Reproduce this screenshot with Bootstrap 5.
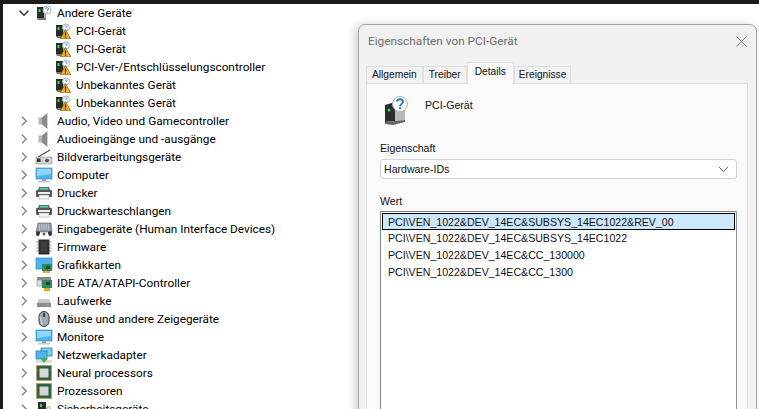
<!DOCTYPE html>
<html lang="de"><head><meta charset="utf-8"><title>Geräte-Manager</title>
<link href="https://cdn.jsdelivr.net/npm/bootstrap@5.3.0/dist/css/bootstrap.min.css" rel="stylesheet">
<style>
html,body{height:409px;overflow:hidden;background:#fff}
body{font-family:"Roboto","Noto Sans",sans-serif;font-size:11.8px;color:#000;position:relative}
.frame{height:409px;overflow:hidden;border-top:4px solid #1c1c1c;border-left:3px solid #1c1c1c}
.dev-row{height:18px;line-height:18px;white-space:nowrap}
.dev-top{padding-left:15px}
.dev-child{padding-left:52px}
.dev-chev{width:12px;height:12px;flex:none;margin-right:6px}
.dev-ico{width:16px;height:16px;flex:none}
.dev-ico-b{width:18px;height:16px;flex:none;margin-right:4px;margin-left:-1px}
.dev-label{margin-left:5px}
.dlg{position:absolute;left:358px;top:24px;width:399px;height:400px;background:#f1f1f1;border:1px solid #a4a4a4;border-radius:7px 7px 0 0;box-shadow:-4px 0 9px rgba(0,0,0,.16);font-family:"Liberation Sans",sans-serif;font-size:10.6px;color:#111}
.dlg-title{height:33px;font-family:"Roboto",sans-serif;font-size:11.8px;color:#6d6d6d;padding:0 9px}
.dlg-x{width:11px;height:11px}
.dlg-tabs{height:21px;margin:4px 0 0 7px;border:0;flex-wrap:nowrap}
.dlg-tabs .nav-link{font-size:10.2px;line-height:14px;color:#111;padding:1px 5px 0;height:17px;margin:4px 0 0;border:1px solid #dfdfdf;border-bottom:0;border-radius:0;background:#f1f1f1;white-space:nowrap}
.dlg-tabs .nav-item:last-child .nav-link{padding:1px 3.500px 0 4px}
.dlg-tabs .nav-link.active{height:22px;margin-top:0;margin-bottom:-1px;padding:2px 7px 0;background:#fafafa;color:#111;border-color:#dfdfdf;position:relative;z-index:1}
.dlg-panel{margin:0 8px 0 7px;height:345px;background:#fafafa;border:1px solid #dfdfdf;padding:12px 10px 0 13px}
.dlg-head{height:29px;gap:17px}
.dlg-head span{margin-top:-9px;font-size:10.6px}
.dlg-lbl{height:14px;line-height:14px}
.dlg-sel{height:20px;margin-top:4px;background:#fff;border:1px solid #d2d2d2;border-radius:3px;padding:0 3px;line-height:18px;font-size:10.6px}
.dlg-list{margin-top:3px;height:230px;background:#fff;border:1px solid #7b8288;border-right-color:#8a93a8;border-bottom:0;border-radius:0;padding:1px;display:block}
.dlg-item{height:17px;line-height:16px;padding:0 5px;border:1px solid transparent;background:transparent;border-radius:0;color:#111;font-size:10.6px;white-space:nowrap}
.dlg-item.active{background:#cce8ff;border-color:#000;color:#111;margin-top:0}
.wert-lbl{margin-top:15px}
</style></head><body>
<svg width="0" height="0" class="d-none" aria-hidden="true"><defs>
<symbol id="c-r" viewBox="0 0 12 12"><path d="M4 1.800 8.200 6 4 10.200" fill="none" stroke="#8a8a8a" stroke-width="1.500"/></symbol>
<symbol id="c-d" viewBox="0 0 12 12"><path d="M1.500 3.800 6 8.200 10.500 3.800" fill="none" stroke="#333" stroke-width="1.600"/></symbol>
<symbol id="u-base" viewBox="0 0 16 16"><rect x="1" y="2" width="7.500" height="11" fill="#2b2b2b"/><rect x="8" y="3" width="2" height="10" fill="#a9a9a9"/><rect x="2.500" y="4" width="2" height="3" fill="#35e04a"/><path d="M1 13h9v2H2z" fill="#777"/></symbol>
<symbol id="unk" viewBox="0 0 16 16"><use href="#u-base"/><circle cx="11" cy="5" r="4" fill="#fff" stroke="#9fb3c8"/><path d="M9.600 3.800c.2-1.500 2.900-1.500 2.900.1 0 1.100-1.400 1.200-1.400 2.300M11.100 7v.8" fill="none" stroke="#3a7fc0" stroke-width="1"/></symbol>
<symbol id="warn" viewBox="0 0 16 16"><use href="#u-base"/><circle cx="11" cy="4.500" r="3.500" fill="#fff" stroke="#9fb3c8"/><path d="M10 3.500c.2-1 2-1 2 .1 0 .7-.9.9-.9 1.500" fill="none" stroke="#3a7fc0" stroke-width=".8"/><path d="M10.500 6.500 15.800 15.800H5.200z" fill="#f2b01e" stroke="#5b4300" stroke-width=".6"/><path d="M10.500 9.500v3.200M10.500 13.600v1.200" stroke="#222" stroke-width="1.200"/></symbol>
<symbol id="aud" viewBox="0 0 16 16"><rect x="2.500" y="4.500" width="3.500" height="7" fill="#b5b5b5"/><path d="M6 4.500 11.500 0v16L6 11.500z" fill="#8b8b8b"/><path d="M11.500 .5v15" stroke="#d3d3d3"/></symbol>
<symbol id="cam" viewBox="0 0 18 16"><path d="M3 8 15 1" stroke="#555" stroke-width="1.300"/><path d="M1 8h16v7H1z" fill="#d4d4d4" stroke="#888" stroke-width=".6"/><rect x="2" y="9.500" width="3.500" height="3.500" fill="#333"/><circle cx="12" cy="11.500" r="2.500" fill="#555" stroke="#eee"/></symbol>
<symbol id="mon" viewBox="0 0 18 16"><rect x="1" y="1" width="16" height="11" fill="#4cb4ee" stroke="#3d88b8" stroke-width=".7"/><path d="M2 2h14v5L2 9z" fill="#8fd6f8"/><rect x="7" y="12" width="4" height="2" fill="#a3a3a3"/><rect x="3" y="14" width="12" height="1.500" fill="#c8c8c8"/></symbol>
<symbol id="prn" viewBox="0 0 18 16"><path d="M4 2h10l1 3H3z" fill="#5d6a6c"/><rect x="5" y="3" width="8" height="1.500" fill="#4fdc92"/><rect x="1" y="5" width="16" height="7" rx="1" fill="#555"/><rect x="3" y="7" width="12" height="2" fill="#eee"/><rect x="4" y="10" width="10" height="4" fill="#f4f4f4" stroke="#999" stroke-width=".5"/></symbol>
<symbol id="hid" viewBox="0 0 18 16"><path d="M3 2h13l1 9H1z" fill="#8d99a6" stroke="#5a6570" stroke-width=".6"/><path d="M4 4h10M4 6h11M4 8h11" stroke="#e9eef2" stroke-dasharray="1.200 1"/><path d="M2 10c-1.500 2-1.500 5 1 5 2 0 2-4 2-4zM16 10c1.500 2 1.500 5-1 5-2 0-2-4-2-4z" fill="#333"/><circle cx="9" cy="13" r="1.500" fill="#666"/></symbol>
<symbol id="chip" viewBox="0 0 16 16"><rect x="2.500" y="0.500" width="11" height="15" fill="#2d2d2d"/><path d="M.5 3h2M.5 6h2M.5 9h2M.5 12h2M13.500 3h2M13.500 6h2M13.500 9h2M13.500 12h2" stroke="#888" stroke-width="1.200"/><rect x="4.500" y="2.500" width="7" height="11" fill="#3e3e3e"/></symbol>
<symbol id="gpu" viewBox="0 0 18 16"><rect x="1" y="1" width="16" height="11" fill="#4cb4ee" stroke="#3d88b8" stroke-width=".7"/><rect x="7" y="7" width="10" height="7" fill="#2f8a62"/><rect x="11" y="9" width="4" height="3" fill="#174a33"/><rect x="8" y="14" width="7" height="2" fill="#e2a92b"/></symbol>
<symbol id="ide" viewBox="0 0 18 16"><rect x="2" y="2" width="14" height="4" fill="#8a8a8a"/><rect x="2" y="5" width="5" height="6" fill="#ddd" stroke="#777" stroke-width=".5"/><rect x="7" y="5" width="10" height="8" fill="#2f8a62"/><rect x="11" y="7" width="4" height="3" fill="#174a33"/><rect x="9" y="13" width="6" height="3" fill="#e2a92b"/></symbol>
<symbol id="drv" viewBox="0 0 18 16"><path d="M4 6h10l2 4H2z" fill="#c9c9c9"/><rect x="2" y="10" width="14" height="4" fill="#8c8c8c"/><rect x="12" y="11" width="2" height="1.500" fill="#36e05a"/></symbol>
<symbol id="mou" viewBox="0 0 16 16"><rect x="3" y="0.500" width="10" height="15" rx="5" fill="#9fa9b3" stroke="#333" stroke-width="1"/><path d="M8 2v4" stroke="#222" stroke-width="1.500"/><path d="M4 6c1 3 1 6 3 8" stroke="#d8dfe5" fill="none"/></symbol>
<symbol id="net" viewBox="0 0 18 16"><rect x="6" y="1" width="11" height="8" fill="#7ccaf2" stroke="#2f7fb0" stroke-width=".8"/><rect x="1" y="4" width="11" height="8" fill="#56b4ea" stroke="#2f7fb0" stroke-width=".8"/><path d="M1 13.500h16v2H1z" fill="#ccc"/><path d="M9 9v4M6 12h6l-3 3.500z" fill="#43b649" stroke="#43b649"/></symbol>
<symbol id="cpu" viewBox="0 0 16 16"><rect x="0.500" y="0.500" width="15" height="15" fill="#3d6c4e" stroke="#b89234" stroke-dasharray="1 1"/><rect x="1.500" y="1.500" width="13" height="13" fill="#2f5c40"/><rect x="3.500" y="3.500" width="9" height="9" fill="#d4d7d4"/></symbol>
<symbol id="sec" viewBox="0 0 16 16"><rect x="2" y="1" width="8" height="13" fill="#2b2b2b"/><rect x="4" y="3" width="2" height="3" fill="#35e04a"/><path d="M11 8V6.500a1.800 1.800 0 0 1 3 0V8" fill="none" stroke="#b08d3a"/><rect x="9.500" y="8" width="6" height="6" fill="#e6bf55"/></symbol>
</defs></svg>

<main class="frame">
<div class="dev-row dev-top d-flex align-items-center"><svg class="dev-chev"><use href="#c-d"/></svg><svg class="dev-ico"><use href="#unk"/></svg><span class="dev-label">Andere Geräte</span></div>
<div class="dev-row dev-child d-flex align-items-center"><svg class="dev-ico"><use href="#warn"/></svg><span class="dev-label">PCI-Gerät</span></div>
<div class="dev-row dev-child d-flex align-items-center"><svg class="dev-ico"><use href="#warn"/></svg><span class="dev-label">PCI-Gerät</span></div>
<div class="dev-row dev-child d-flex align-items-center"><svg class="dev-ico"><use href="#warn"/></svg><span class="dev-label">PCI-Ver-/Entschlüsselungscontroller</span></div>
<div class="dev-row dev-child d-flex align-items-center"><svg class="dev-ico"><use href="#warn"/></svg><span class="dev-label">Unbekanntes Gerät</span></div>
<div class="dev-row dev-child d-flex align-items-center"><svg class="dev-ico"><use href="#warn"/></svg><span class="dev-label">Unbekanntes Gerät</span></div>
<div class="dev-row dev-top d-flex align-items-center"><svg class="dev-chev"><use href="#c-r"/></svg><svg class="dev-ico"><use href="#aud"/></svg><span class="dev-label">Audio, Video und Gamecontroller</span></div>
<div class="dev-row dev-top d-flex align-items-center"><svg class="dev-chev"><use href="#c-r"/></svg><svg class="dev-ico"><use href="#aud"/></svg><span class="dev-label">Audioeingänge und -ausgänge</span></div>
<div class="dev-row dev-top d-flex align-items-center"><svg class="dev-chev"><use href="#c-r"/></svg><svg class="dev-ico-b"><use href="#cam"/></svg><span>Bildverarbeitungsgeräte</span></div>
<div class="dev-row dev-top d-flex align-items-center"><svg class="dev-chev"><use href="#c-r"/></svg><svg class="dev-ico-b"><use href="#mon"/></svg><span>Computer</span></div>
<div class="dev-row dev-top d-flex align-items-center"><svg class="dev-chev"><use href="#c-r"/></svg><svg class="dev-ico-b"><use href="#prn"/></svg><span>Drucker</span></div>
<div class="dev-row dev-top d-flex align-items-center"><svg class="dev-chev"><use href="#c-r"/></svg><svg class="dev-ico-b"><use href="#prn"/></svg><span>Druckwarteschlangen</span></div>
<div class="dev-row dev-top d-flex align-items-center"><svg class="dev-chev"><use href="#c-r"/></svg><svg class="dev-ico-b"><use href="#hid"/></svg><span>Eingabegeräte (Human Interface Devices)</span></div>
<div class="dev-row dev-top d-flex align-items-center"><svg class="dev-chev"><use href="#c-r"/></svg><svg class="dev-ico"><use href="#chip"/></svg><span class="dev-label">Firmware</span></div>
<div class="dev-row dev-top d-flex align-items-center"><svg class="dev-chev"><use href="#c-r"/></svg><svg class="dev-ico-b"><use href="#gpu"/></svg><span>Grafikkarten</span></div>
<div class="dev-row dev-top d-flex align-items-center"><svg class="dev-chev"><use href="#c-r"/></svg><svg class="dev-ico-b"><use href="#ide"/></svg><span>IDE ATA/ATAPI-Controller</span></div>
<div class="dev-row dev-top d-flex align-items-center"><svg class="dev-chev"><use href="#c-r"/></svg><svg class="dev-ico-b"><use href="#drv"/></svg><span>Laufwerke</span></div>
<div class="dev-row dev-top d-flex align-items-center"><svg class="dev-chev"><use href="#c-r"/></svg><svg class="dev-ico"><use href="#mou"/></svg><span class="dev-label">Mäuse und andere Zeigegeräte</span></div>
<div class="dev-row dev-top d-flex align-items-center"><svg class="dev-chev"><use href="#c-r"/></svg><svg class="dev-ico-b"><use href="#mon"/></svg><span>Monitore</span></div>
<div class="dev-row dev-top d-flex align-items-center"><svg class="dev-chev"><use href="#c-r"/></svg><svg class="dev-ico-b"><use href="#net"/></svg><span>Netzwerkadapter</span></div>
<div class="dev-row dev-top d-flex align-items-center"><svg class="dev-chev"><use href="#c-r"/></svg><svg class="dev-ico"><use href="#cpu"/></svg><span class="dev-label">Neural processors</span></div>
<div class="dev-row dev-top d-flex align-items-center"><svg class="dev-chev"><use href="#c-r"/></svg><svg class="dev-ico"><use href="#cpu"/></svg><span class="dev-label">Prozessoren</span></div>
<div class="dev-row dev-top d-flex align-items-center"><svg class="dev-chev"><use href="#c-r"/></svg><svg class="dev-ico"><use href="#sec"/></svg><span class="dev-label">Sicherheitsgeräte</span></div>
</main>

<section class="dlg">
<header class="dlg-title d-flex align-items-center justify-content-between"><span>Eigenschaften von PCI-Gerät</span>
<svg class="dlg-x" viewBox="0 0 11 11"><path d="M.5.500l10 10M10.500.500l-10 10" stroke="#767676" fill="none"/></svg></header>
<ul class="nav nav-tabs dlg-tabs">
<li class="nav-item"><a class="nav-link" href="#">Allgemein</a></li>
<li class="nav-item"><a class="nav-link" href="#">Treiber</a></li>
<li class="nav-item"><a class="nav-link active" href="#">Details</a></li>
<li class="nav-item"><a class="nav-link" href="#">Ereignisse</a></li>
</ul>
<div class="dlg-panel">
<div class="dlg-head d-flex align-items-center ms-1"><svg width="24" height="30" viewBox="0 0 24 30"><path d="M1 9 11 6v19L1 26z" fill="#2d2d2d"/><path d="M11 6l10 2v16l-10 1z" fill="#b9b9b9"/><path d="M1 26l10-1 10-1v2L9 29 1 28z" fill="#666"/><circle cx="5" cy="14" r="1.500" fill="#2ee04c"/><circle cx="16" cy="8" r="7.500" fill="#fff" stroke="#a5b6c6"/><path d="M13 5.500c.4-3 6-3 6 .2 0 2.300-3 2.300-3 4.500M16 11.300v1.700" fill="none" stroke="#2f78bd" stroke-width="1.900"/></svg><span>PCI-Gerät</span></div>
<div class="dlg-lbl mt-3">Eigenschaft</div>
<div class="dlg-sel d-flex align-items-center justify-content-between"><span>Hardware-IDs</span><svg class="me-1" width="11" height="7" viewBox="0 0 11 7"><path d="M1 1l4.500 4.500L10 1" fill="none" stroke="#666"/></svg></div>
<div class="dlg-lbl wert-lbl">Wert</div>
<div class="list-group dlg-list">
<div class="list-group-item dlg-item active">PCI\VEN_1022&amp;DEV_14EC&amp;SUBSYS_14EC1022&amp;REV_00</div>
<div class="list-group-item dlg-item">PCI\VEN_1022&amp;DEV_14EC&amp;SUBSYS_14EC1022</div>
<div class="list-group-item dlg-item">PCI\VEN_1022&amp;DEV_14EC&amp;CC_130000</div>
<div class="list-group-item dlg-item">PCI\VEN_1022&amp;DEV_14EC&amp;CC_1300</div>
</div>
</div>
</section>
</body></html>
